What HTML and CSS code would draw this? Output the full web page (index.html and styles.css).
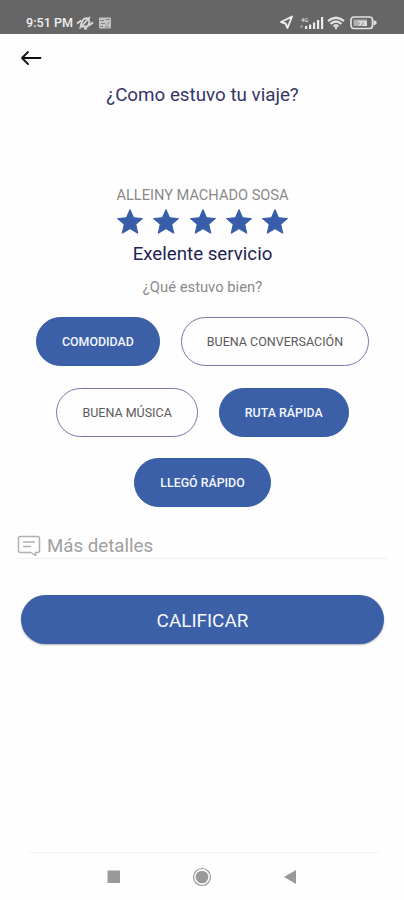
FILE: index.html
```html
<!DOCTYPE html>
<html lang="es">
<head>
  <meta charset="UTF-8" />
  <meta name="viewport" content="width=device-width, initial-scale=1.0"/>
  <title>Calificar viaje</title>
  <link rel="stylesheet" href="styles.css">
</head>
<body>
  <!-- Status bar -->
  <div class="status-bar">
    <span class="time">9:51 PM</span>
    <svg class="icon-mute" width="18" height="16" viewBox="0 0 18 16" fill="none" stroke="#dcdcdc" stroke-width="1.8">
      <path d="M4.5 11 L6.5 5.5 Q9 2 12.5 4 L13.5 7 L11.5 11.5 H6"/>
      <path d="M3.5 13.5 L14 2 M1 8.5 L5 5.5 M13 10.5 L17 7.5 M8 13.5 H11"/>
    </svg>
    <svg class="icon-app" width="14" height="14" viewBox="0 0 14 14">
      <rect x="1" y="1.5" width="12" height="11" rx="1" fill="#c4c4c4"/>
      <path d="M2 4.5 H6 M8 3.5 H12 M3 7.5 H7 M8.5 9 L11.5 6 M2 10.5 H5 M7 11 H11" stroke="#808080" stroke-width="1"/>
    </svg>
    <div class="status-right">
      <svg width="15" height="15" viewBox="0 0 15 15" fill="none" stroke="#ececec" stroke-width="1.9" stroke-linejoin="round">
        <path d="M13 1.5 L2 7 L6.5 8.5 L8.5 13 Z"/>
      </svg>
      <svg class="icon-signal" width="26" height="14" viewBox="0 0 26 14" fill="#ececec">
        <text class="network" x="2" y="5.5">4G</text>
        <circle cx="2.5" cy="10.5" r="1.5" fill="#999"/>
        <rect x="6" y="10" width="2.2" height="3"/>
        <rect x="10" y="8.5" width="2.2" height="4.5"/>
        <rect x="14" y="6.5" width="2.2" height="6.5"/>
        <rect x="18" y="4" width="2.2" height="9"/>
        <rect x="22" y="1" width="2.2" height="12"/>
      </svg>
      <svg class="icon-wifi" width="18" height="14" viewBox="0 0 18 14" fill="none" stroke="#e2e2e2" stroke-width="2.3">
        <path d="M1 5 Q9 -1.5 17 5 M3.5 8 Q9 3 14.5 8 M6.5 10.5 Q9 8 11.5 10.5"/>
        <circle cx="9" cy="12" r="1.2" fill="#e2e2e2" stroke="none"/>
      </svg>
      <svg class="icon-battery" width="27" height="14" viewBox="0 0 27 14">
        <rect x="1" y="1" width="21.5" height="11.5" rx="3" fill="none" stroke="#e2e2e2" stroke-width="1.7"/>
        <rect x="3.5" y="3.5" width="13.5" height="6.5" fill="#b0b0b0"/>
        <path d="M23.5 4 L26.5 5.5 V8 L23.5 9.5 Z" fill="#e2e2e2"/>
        <text class="level" x="8" y="9.7">73</text>
      </svg>
    </div>
  </div>

  <!-- Header -->
  <header>
    <a href="#" class="back" aria-label="Volver">
      <svg width="22" height="16" viewBox="0 0 22 16" fill="none" stroke="#111" stroke-width="1.8" stroke-linecap="round" stroke-linejoin="round">
        <path d="M20.5 8 H2 M8 2 L2 8 L8 14"/>
      </svg>
    </a>
    <h1>¿Como estuvo tu viaje?</h1>
  </header>

  <main>
    <p class="driver">ALLEINY MACHADO SOSA</p>

    <svg class="symbols">
      <symbol id="star" viewBox="0 0 28 27">
        <path d="M14 1.5 L17.6 9.7 L26.5 10.6 L19.8 16.4 L21.8 25.3 L14 20.7 L6.2 25.3 L8.2 16.4 L1.5 10.6 L10.4 9.7 Z"/>
      </symbol>
    </svg>
    <div class="stars">
      <svg><use href="#star"/></svg>
      <svg><use href="#star"/></svg>
      <svg><use href="#star"/></svg>
      <svg><use href="#star"/></svg>
      <svg><use href="#star"/></svg>
    </div>

    <p class="rating">Exelente servicio</p>
    <p class="question">¿Qué estuvo bien?</p>

    <div class="chips">
      <button class="chip selected">COMODIDAD</button>
      <button class="chip">BUENA CONVERSACIÓN</button>
      <button class="chip">BUENA MÚSICA</button>
      <button class="chip selected">RUTA RÁPIDA</button>
      <button class="chip selected">LLEGÓ RÁPIDO</button>
    </div>

    <div class="details">
      <svg width="24" height="22" viewBox="0 0 24 22" fill="none" stroke="#b0b0b0" stroke-width="1.5" stroke-linejoin="round" stroke-linecap="round">
        <path d="M3.5 1.5 H20.5 Q22.5 1.5 22.5 3.5 V15.5 Q22.5 17.5 20.5 17.5 H18.5 V20.5 L14 17.5 H3.5 Q1.5 17.5 1.5 15.5 V3.5 Q1.5 1.5 3.5 1.5 Z"/>
        <path d="M6.5 7 H17.5 M6.5 11.5 H13.5"/>
      </svg>
      <span>Más detalles</span>
    </div>

    <button class="submit">CALIFICAR</button>
  </main>

  <!-- System navigation -->
  <nav>
    <svg width="14" height="14" viewBox="0 0 14 14"><rect x="0.5" y="0.5" width="12.5" height="12.5" fill="#999"/></svg>
    <svg width="20" height="20" viewBox="0 0 20 20">
      <circle cx="10" cy="10" r="8.5" fill="none" stroke="#999" stroke-width="1.2"/>
      <circle cx="10" cy="10" r="6.3" fill="#999"/>
    </svg>
    <svg width="14" height="16" viewBox="0 0 14 16"><path d="M13 1 V15 L1 8 Z" fill="#999"/></svg>
  </nav>
</body>
</html>
```
FILE: styles.css
```css
* {
  box-sizing: border-box;
}

body {
  margin: 0;
  height: 900px;
  display: flex;
  flex-direction: column;
  font-family: Roboto, sans-serif;
  background-color: #fefefe;
  overflow: hidden;
}

p, h1 {
  margin: 0;
  padding-left: 1px;
  text-align: center;
  white-space: nowrap;
}

button {
  font-family: inherit;
  cursor: pointer;
}

/* Status bar */
.status-bar {
  height: 34px;
  padding: 11px 27px 0 26px;
  display: flex;
  align-items: center;
  background-color: #666;
  color: #eee;
}

.time {
  font-size: 12.6px;
  font-weight: 500;
  width: 50px;
  white-space: nowrap;
}

.icon-app {
  margin-left: 4px;
}

.status-right {
  margin-left: auto;
  display: flex;
  align-items: center;
}

.icon-signal {
  margin-left: 5px;
}

.icon-wifi {
  margin-left: 2px;
}

.icon-battery {
  margin-left: 5px;
}

.network {
  font-size: 6px;
}

.level {
  font-size: 8px;
  font-weight: 700;
  fill: #eee;
}

/* Header */
header {
  height: 151px;
}

.back {
  display: block;
  height: 49px;
  padding: 16px 0 0 20px;
}

.back svg {
  display: block;
}

h1 {
  font-size: 18.8px;
  font-weight: 400;
  line-height: 24px;
  color: #35356a;
}

/* Rating */
main {
  flex: 1;
}

.driver {
  font-size: 14.6px;
  line-height: 20px;
  color: #8a8a8a;
}

.symbols {
  display: none;
}

.stars {
  display: flex;
  justify-content: center;
  gap: 8.4px;
  padding: 3px 0 0 1px;
}

.stars svg {
  width: 28px;
  height: 27px;
  fill: #385ea9;
  stroke: #385ea9;
  stroke-width: 1;
  stroke-linejoin: round;
}

.rating {
  margin-top: 7px;
  font-size: 18.7px;
  line-height: 24px;
  color: #1f1f55;
}

.question {
  margin-top: 11px;
  font-size: 14.8px;
  line-height: 20px;
  color: #8a8a8a;
}

/* Options */
.chips {
  display: flex;
  flex-wrap: wrap;
  justify-content: center;
  gap: 21.5px 21px;
  margin-top: 20px;
  padding-left: 1px;
}

.chip {
  height: 49px;
  padding: 0 25px;
  border: 1px solid #7478aa;
  border-radius: 25px;
  background-color: #fefefe;
  font-size: 12.5px;
  color: #5a5a5a;
}

.chip.selected {
  border-color: #345ba5;
  background-color: #3b60a8;
  color: #f3f6ff;
  font-size: 12.4px;
  font-weight: 500;
}

.details {
  display: flex;
  align-items: center;
  gap: 6px;
  height: 28px;
  margin: 24px 16px 0 17px;
  padding-top: 2px;
  border-bottom: 1px solid #f0f0f0;
  font-size: 18.7px;
  color: #a0a0a0;
}

.submit {
  display: block;
  width: 363px;
  height: 49px;
  margin: 36px auto 0 21px;
  padding-top: 2px;
  border: none;
  border-radius: 25px;
  background-color: #3b60a8;
  box-shadow: 0 1px 2px rgba(0,0,0,0.3);
  font-size: 18.9px;
  color: #f5f7ff;
}

/* System navigation */
nav {
  display: flex;
  align-items: center;
  justify-content: space-between;
  height: 48px;
  margin: 0 24px 0 28px;
  padding: 0 83px 0 79px;
  border-top: 1px solid #f4f4f4;
}
```
